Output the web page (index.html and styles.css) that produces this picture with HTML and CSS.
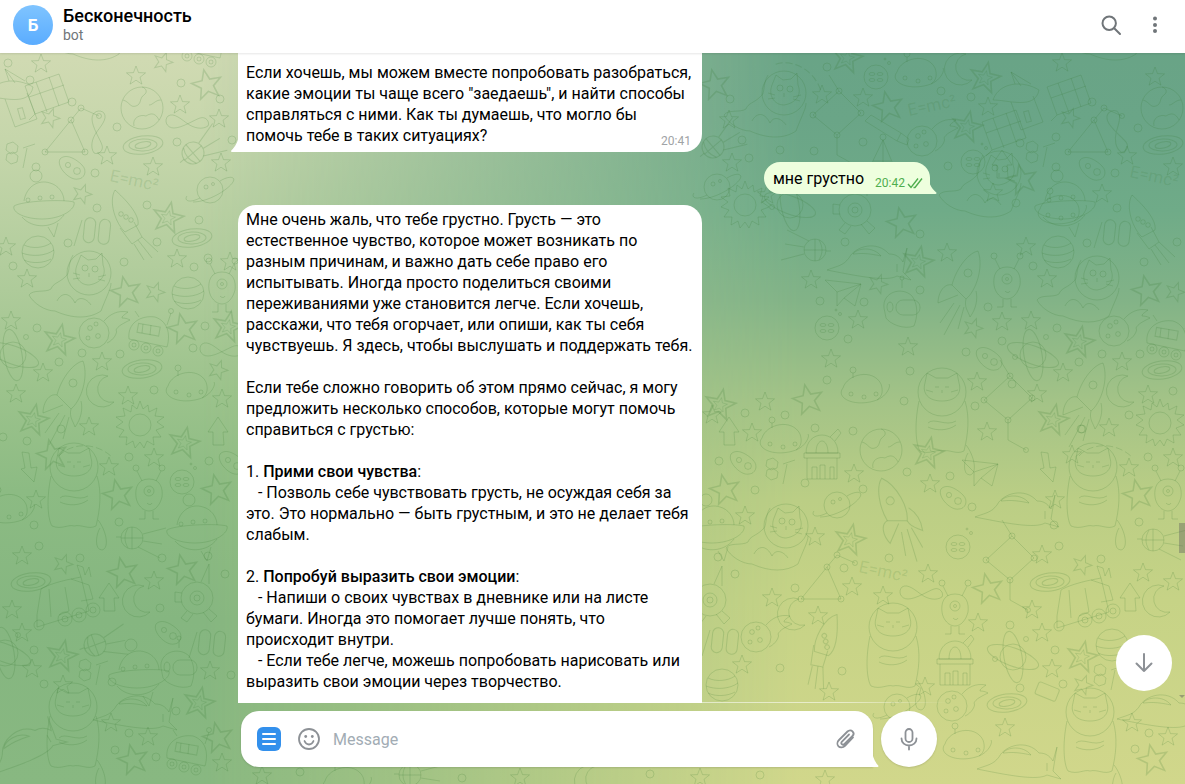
FILE: index.html
```html
<!DOCTYPE html>
<html lang="ru">
<head>
<meta charset="utf-8">
<title>Бесконечность</title>
<link rel="stylesheet" href="styles.css">
</head>
<body>
<div class="app">
<svg class="wallpaper" width="1185" height="784" viewBox="0 0 1185 784" aria-hidden="true">
<defs>
<polygon id="a" points="0,-10 2.5,-3.4 9.5,-3.1 4,1.3 5.9,8.1 0,4.2 -5.9,8.1 -4,1.3 -9.5,-3.1 -2.5,-3.4"/>
<g id="b"><use href="#a" transform="rotate(20)"/></g>
<g id="c"><use href="#a" transform="rotate(-12) scale(1.55)"/></g>
<g id="d"><use href="#a" transform="rotate(12) scale(1.6)"/><use href="#a" transform="rotate(12) scale(.75)"/></g>
<circle id="o" r="4"/>
<g id="sat"><circle r="13"/><path d="M-10,8C-22,14-26,10-23,6M10,-9C20,-15 26,-13 23,-8C18,0-2,12-17,12"/><circle cx="-4" cy="-3" r="2"/><circle cx="3" cy="-6" r="1.5"/></g>
<g id="str"><circle r="16"/><path d="M-14,-7C-6,-3 6,-4 13,-9M-16,1C-6,5 8,4 16,-2M-14,8C-6,12 6,11 13,7"/></g>
<g id="glo"><circle r="21"/><path d="M-19,-8C-12,-6-12,0-6,-2 0,-4-3,-10 2,-13 6,-16 4,-20 0,-21M-8,18C-10,10-2,6 4,8 10,4 14,6 17,12M19,-8C13,-8 11,-3 7,-3"/></g>
<g id="gal" transform="rotate(-8)"><ellipse rx="20" ry="9"/><ellipse rx="14" ry="6" transform="rotate(6)"/><ellipse rx="8" ry="3" transform="rotate(-4)"/></g>
<path id="mo" d="M6,-16A16,16 0 1 0 12,10A13,13 0 0 1 6,-16Z"/>
<path id="ar" d="M0,-15L10,0L5,0L6,13L-5,13L-5,0L-10,0Z"/>
<path id="ard" d="M-6,-15L1,-14L3,1L9,0L6,15L-7,2L-3,1Z"/>
<g id="sun"><circle r="11"/><path d="M0,-24L3,-16 8,-20 9,-13 17,-17 15,-9 24,-8 17,-3 24,2 16,5 21,12 13,12 14,20 7,16 4,23 0,17 -5,23 -7,16 -14,20 -13,12 -21,12 -16,5 -24,2 -17,-3 -24,-8 -15,-9 -17,-17 -9,-13 -8,-20 -3,-16Z"/></g>
<g id="ro"><path d="M-13,-30C-4,-22 12,-6 10,5L-3,12C-12,4-20,-18-13,-30Z"/><path d="M-8,8L4,24 14,17 6,2"/><circle cx="-7" cy="-6" r="2.3"/><circle cx="-2" cy="-3" r="2.3"/><circle cx="3" cy="0" r="2.3"/><path d="M10,20L24,38M6,24L16,40M14,17L30,32"/></g>
<g id="rof"><path d="M18,-34C8,-32-4,-16-8,0L6,14C16,6 24,-18 18,-34Z"/><path d="M-8,0C-16,-2-22,8-22,18L-2,10M6,14C4,22 8,26 10,32 16,24 18,14 16,6"/><circle cx="8" cy="-12" r="4"/><path d="M-6,18L-20,38M0,20L-16,50M4,22L-2,44"/></g>
<g id="cat"><circle cx="14" cy="-22" r="22"/><path d="M2,-30L6,-40 13,-35 21,-36 27,-42 28,-30C32,-20 26,-12 14,-10 4,-10-2,-20 2,-30Z"/><circle cx="10" cy="-27" r="3"/><circle cx="20" cy="-26" r="3"/><path d="M14,-22V-18M5,-20L-2,-22M5,-17L-2,-16M23,-18L31,-20M23,-16L30,-14"/><path d="M-2,-40C-8,-30-4,-22-10,-18-16,-12-22,-12-24,-6-30,-2-42,-6-46,0-42,8-30,16-20,16-2,24 14,24 26,16 32,0 36,-6 36,-12 36,-12"/><path d="M-18,6C-14,-2-6,-4 0,8 4,0 12,4 16,10"/></g>
<g id="fat"><circle cy="-33" r="24"/><path d="M-17,-42L-15,-52-6,-47H6L15,-52 17,-42C20,-32 14,-24 0,-24-14,-24-20,-32-17,-42Z"/><path d="M-7,-38H-3M3,-38H7M0,-35V-32M-9,-33L-16,-35M9,-33L16,-35"/><path d="M-23,-24C-28,0-26,20-22,26-12,30-6,24 0,26 8,24 14,30 22,26 26,10 28,-8 23,-24"/><path d="M-14,-2C-8,-8 4,2 14,-4M-14,2C-6,6 6,6 14,0"/><path d="M24,20C32,30 36,48 28,50 20,50 22,34 26,28"/></g>
<g id="uf"><path d="M-18,-2C-16,-16-4,-24 8,-20 16,-18 22,-10 22,-2"/><circle cx="-6" cy="-27" r="6"/><path d="M-28,3C-20,-2 20,-4 32,-1 34,6 20,16 0,16-16,16-30,10-28,3Z"/><path d="M-20,14C-10,26 12,26 22,12M6,24L12,34 16,20"/><circle cx="-14" cy="-3" r="2"/><circle cx="-2" cy="-5" r="2"/><circle cx="10" cy="-6" r="2"/></g>
<g id="uf2"><path d="M-20,-4C-16,-18 10,-24 18,-8 20,-2 20,4 14,8"/><path d="M-20,-4C-28,6-8,16 14,8 24,4 28,-6 26,-8"/><circle cx="-12" cy="2" r="2"/><circle cx="1" cy="5" r="2"/><circle cx="13" cy="2" r="2"/><circle cx="-10" cy="-22" r="3"/><path d="M-10,-19V-14"/></g>
<g id="al"><path d="M0,-16C12,-16 14,-6 13,2 11,10 6,16 0,16-6,16-12,10-13,2-14,-6-12,-16 0,-16Z"/><circle cy="-4" r="5"/><circle cy="-4" r="1.5"/><path d="M-7,-14L-12,-24M7,-14L12,-24M-4,16V24H-10M4,16V24H10M-2,8C0,10 2,10 3,8"/><circle cx="-13" cy="-27" r="3"/><circle cx="13" cy="-27" r="3"/></g>
<g id="me"><circle cx="-8" cy="3" r="15"/><circle cx="-12" cy="-2" r="2.4"/><circle cx="-4" cy="6" r="2.4"/><circle cx="-6" cy="-6" r="2"/><circle cx="-14" cy="8" r="2"/><path d="M2,-9C8,-16 16,-20 26,-18 22,-15 20,-14 20,-12 24,-12 26,-11 28,-10 20,-6 16,-4 14,0 16,2 12,10 5,13"/></g>
<g id="rv"><path d="M-18,6C-20,-10-6,-18 8,-16 20,-12 24,0 20,14L-18,6Z"/><rect x="-10" y="-8" width="22" height="9" transform="rotate(10)"/><path d="M-4,-9L-5,0M4,-8L3,2M20,-8L24,-20M-8,-16L-12,-22"/><circle cx="24" cy="-22" r="2.5"/><circle cx="-13" cy="12" r="5"/><circle cx="-1" cy="15" r="5"/><circle cx="11" cy="18" r="5"/><circle cx="-13" cy="12" r="2"/><circle cx="-1" cy="15" r="2"/><circle cx="11" cy="18" r="2"/></g>
<g id="h"><path d="M-18,16L-10,-10-10,-10"/><rect x="-8" y="-12" width="11" height="25" rx="5.5" transform="rotate(6)"/><rect x="7" y="-12" width="11" height="25" rx="5.5" transform="rotate(6)"/></g>
<g id="tri"><path d="M-22,16L4,-16 18,16ZM4,-16L14,-28 32,-20"/><circle cx="-22" cy="16" r="3"/><circle cx="4" cy="-16" r="3"/><circle cx="18" cy="16" r="3"/><circle cx="14" cy="-28" r="3"/><circle cx="32" cy="-20" r="2.5"/></g>
<g id="box"><path d="M-24,0L2,-24 24,-2 0,20ZM0,20V40L18,50M2,-24L-8,-40"/><circle cx="-24" cy="0" r="3"/><circle cx="2" cy="-24" r="3"/><circle cx="24" cy="-2" r="3"/><circle cx="0" cy="20" r="3"/><circle cx="18" cy="50" r="2.5"/></g>
<path id="inf" d="M-20,-6C-14,-10-6,-2 0,2 6,6 14,8 20,4 22,0 18,-6 12,-4 6,-2-6,6-14,6-22,6-24,-2-20,-6Z"/>
<g id="hex"><path d="M-8,-12L-2,-14 3,-10 2,-4-4,-2-9,-6ZM-8,-2L-2,-4 3,0 2,6-4,8-9,4ZM8,-8L20,-12M12,-8L8,12"/></g>
<g id="bl"><path d="M-12,-8C-6,-14 4,-8 10,-2 16,4 12,12 6,12-2,14-16,0-12,-8Z"/><circle cx="-4" cy="-2" r="2.6"/><circle cx="5" cy="4" r="3.4"/></g>
<g id="mf"><circle r="12"/><ellipse cx="-4" cy="-3" rx="3" ry="1.5"/><ellipse cx="4" cy="-3" rx="3" ry="1.5"/><ellipse cx="-4" cy="3" rx="3" ry="1.5"/><ellipse cx="4" cy="3" rx="3" ry="1.5"/><circle cx="13" cy="-14" r="1.5"/><circle cx="9" cy="-18" r="1"/></g>
<path id="dsh" d="M-28,6C-18,-6 8,-10 26,8" stroke-dasharray="7 3"/>
<g id="sp"><circle r="11"/><path d="M-11,0H11M0,-11V11M-4,-10C-8,-3-8,3-4,10M11,-4L34,-10M11,3L30,6M6,9L28,20M-11,-1H-16"/></g>
<g id="gr"><path d="M-20,-6L14,-18 24,10-10,22ZM-9,-10L2,20M4,-15L14,14M-16,5L19,-7"/><path d="M-10,22L-16,28"/></g>
<g id="dsh2"><path d="M-30,-10C-14,-10 12,0 16,-20 0,-30-24,-28-30,-10ZM-12,-8L-2,20 20,12 10,-14"/><rect x="0" y="2" width="5" height="11" transform="rotate(-16)"/><path d="M-8,-26L-12,-38 -2,-24M-12,-38L8,-26"/></g>
<g id="sh"><path d="M-40,12C-30,8-24,8-18,0-12,-12 10,-18 22,-4 28,-4 32,-2 36,4L40,-10 36,14 44,22 30,18C20,24-10,18-40,12Z"/><path d="M-14,-4C-10,-10 6,-12 14,-2-4,-6-10,-4-14,-4ZM30,6V14"/></g>
<g id="hel"><path d="M-14,-2C-16,-18 4,-24 14,-14 20,-6 20,6 16,16 6,20-8,14-12,8Z"/><rect x="-2" y="-10" width="24" height="15" rx="7"/><ellipse cx="-8" cy="-3" rx="3" ry="5"/><path d="M4,-22V-30"/><circle cx="4" cy="-32" r="2"/></g>
<g id="tr"><path d="M-30,8L-26,-18C-20,-22-6,-26 4,-28L14,-30 22,4-30,20Z"/><path d="M-18,-18L-16,10M-2,-20L2,4 -8,8M4,-28L22,-22 26,-8 14,-6M14,-30L10,-42 16,-40 18,-32M18,-32L22,-40 24,-30"/><circle cx="-28" cy="18" r="5"/><circle cx="-2" cy="12" r="7"/><circle cx="12" cy="8" r="7"/><circle cx="26" cy="3" r="7"/><circle cx="-2" cy="12" r="3"/><circle cx="12" cy="8" r="3"/><circle cx="26" cy="3" r="3"/></g>
<g id="ob"><path d="M-16,-4C-16,-28 16,-28 16,-4ZM-6,-4C-6,-20 6,-20 6,-4M-18,-4H18V1H-18ZM-15,1V22H15V1M-10,22V10H-5V22M-2,22V8H3V22M8,22V10H12V22M8,-20L16,-28 19,-24 13,-16"/></g>
<path id="pl" d="M-18,-10L18,-6 12,16 1,8-6,16-6,2ZM18,-6L-6,2M18,-6L1,8"/>
<g id="te"><path d="M-18,-12L-12,-18 18,0 14,8ZM18,0L26,6 24,12 14,8"/><circle cy="4" r="3"/><path d="M0,7L-14,36M0,7L12,36M0,7V36M-10,28H8"/></g>
<g id="at"><circle r="13"/><ellipse rx="27" ry="9" transform="rotate(20)"/><ellipse rx="26" ry="9" transform="rotate(80)"/><circle cx="13" cy="-18" r="2.5"/><circle cx="-18" cy="2" r="2.5"/></g>
<g id="rb"><circle r="16"/><circle r="7"/><circle r="3"/><path d="M-15,-5L-22,-6V4L-15,4M4,-16L12,-34 12,-14M-10,13L-16,20-10,24-4,16M6,14L14,24 20,18 12,11"/></g>
<g id="ph"><rect x="-11" y="-7" width="22" height="13" rx="2" transform="rotate(22)"/></g>
<text id="emc" class="emc" text-anchor="middle" transform="rotate(12)">E=mc²</text>
</defs>
<g class="doodles">
<!-- left column -->
<use href="#a" x="41" y="64"/><use href="#o" x="30" y="80"/><use href="#o" x="8" y="63"/><use href="#b" x="50" y="118"/><use href="#o" x="72" y="102"/>
<use href="#dsh2" x="17" y="107"/><use href="#gr" x="45" y="92"/><use href="#a" x="136" y="76"/><use href="#glo" x="142" y="108"/>
<use href="#cat" x="93" y="38"/><use href="#rv" x="200" y="44"/><use href="#b" x="163" y="62"/><use href="#c" x="207" y="85"/><use href="#o" x="181" y="83"/>
<use href="#a" x="180" y="105"/><use href="#o" x="220" y="99"/><use href="#a" x="219" y="119"/><use href="#inf" x="188" y="122"/><use href="#o" x="117" y="127"/>
<use href="#tri" x="67" y="136"/><use href="#inf" x="98" y="133" transform="rotate(90 98 133) scale(1)"/><use href="#gal" x="143" y="145"/><use href="#o" x="177" y="142"/>
<use href="#sp" x="193" y="153" transform="rotate(-40 193 153)"/><use href="#o" x="232" y="140"/><use href="#a" x="107" y="156"/><use href="#a" x="153" y="167"/>
<use href="#bl" x="72" y="167"/><use href="#o" x="36" y="167"/><use href="#hex" x="15" y="156"/><use href="#o" x="95" y="173"/><use href="#a" x="221" y="163"/>
<use href="#emc" x="133" y="186"/><use href="#sat" x="210" y="190"/><use href="#uf" x="42" y="203"/><use href="#b" x="82" y="194"/><use href="#o" x="97" y="208"/><use href="#o" x="147" y="205"/>
<use href="#d" x="168" y="218"/><use href="#ro" x="128" y="220"/><use href="#h" x="92" y="230"/><use href="#o" x="199" y="220"/><use href="#gal" x="192" y="238"/><use href="#o" x="157" y="242"/>
<use href="#o" x="68" y="243"/><use href="#str" x="38" y="252"/><use href="#a" x="6" y="247"/><use href="#a" x="177" y="259"/><use href="#o" x="208" y="258"/><use href="#a" x="230" y="262"/>
<use href="#o" x="194" y="267"/><use href="#o" x="13" y="266"/><use href="#o" x="124" y="262"/><use href="#cat" x="75" y="295"/><use href="#a" x="27" y="279"/><use href="#c" x="126" y="292"/><use href="#b" x="155" y="292"/>
<use href="#str" x="188" y="293"/><use href="#al" x="222" y="288"/><use href="#a" x="11" y="321"/><use href="#o" x="37" y="328"/><use href="#me" x="102" y="330"/><use href="#rv" x="147" y="333"/>
<use href="#c" x="183" y="329"/><use href="#o" x="205" y="326"/><use href="#d" x="228" y="327"/><use href="#d" x="59" y="340"/><use href="#at" x="13" y="355"/><use href="#o" x="82" y="353"/><use href="#o" x="120" y="354"/>
<use href="#o" x="193" y="348"/><use href="#inf" x="222" y="350"/><use href="#a" x="102" y="362"/><use href="#o" x="59" y="362"/><use href="#a" x="43" y="373"/><use href="#gal" x="142" y="369"/>
<use href="#uf2" x="188" y="390"/><use href="#b" x="218" y="370"/><use href="#mo" x="102" y="392"/><use href="#rof" x="65" y="395"/><use href="#a" x="128" y="396"/><use href="#o" x="154" y="390"/><use href="#a" x="16" y="394"/><use href="#a" x="222" y="399"/>
<use href="#d" x="33" y="420"/><use href="#a" x="89" y="427"/><use href="#sun" x="140" y="425"/><use href="#d" x="184" y="443"/><use href="#ar" x="218" y="432"/><use href="#o" x="61" y="429"/><use href="#o" x="27" y="441"/><use href="#o" x="3" y="437"/>
<use href="#c" x="52" y="455"/><use href="#dsh" x="87" y="450"/><use href="#a" x="154" y="458"/><use href="#o" x="129" y="457"/><use href="#o" x="209" y="461"/><use href="#a" x="109" y="467"/><use href="#ard" x="28" y="467"/><use href="#bl" x="232" y="462"/>
<use href="#fat" x="74" y="500"/><use href="#al" x="149" y="495"/><use href="#mf" x="182" y="482"/><use href="#c" x="118" y="495"/><use href="#c" x="217" y="490"/><use href="#a" x="36" y="500"/><use href="#uf2" x="8" y="512"/><use href="#uf" x="195" y="527"/>
<use href="#o" x="119" y="522"/><use href="#o" x="34" y="525"/><use href="#sp" x="132" y="538"/><use href="#o" x="39" y="546"/><use href="#o" x="208" y="556"/><use href="#o" x="162" y="558"/><use href="#a" x="22" y="556"/><use href="#b" x="63" y="564"/><use href="#o" x="80" y="558"/>
<use href="#c" x="123" y="573"/><use href="#c" x="183" y="570"/><use href="#o" x="225" y="574"/><use href="#a" x="154" y="581"/><use href="#gal" x="31" y="582"/><use href="#rb" x="197" y="598"/><use href="#tr" x="67" y="607"/><use href="#ar" x="109" y="598"/><use href="#mo" x="138" y="602"/>
<use href="#a" x="12" y="610"/><use href="#o" x="160" y="608"/><use href="#a" x="22" y="633"/><use href="#bl" x="168" y="632"/><use href="#h" x="207" y="642"/><use href="#sp" x="95" y="645" transform="rotate(-20 95 645)"/><use href="#at" x="5" y="653"/><use href="#o" x="34" y="650"/>
<use href="#d" x="62" y="656"/><use href="#uf" x="137" y="672"/><use href="#hel" x="175" y="670"/><use href="#a" x="210" y="671"/><use href="#o" x="231" y="675"/><use href="#a" x="32" y="669"/><use href="#hex" x="88" y="673"/><use href="#o" x="44" y="684"/><use href="#a" x="63" y="685"/><use href="#o" x="112" y="682"/>
<use href="#d" x="199" y="703"/><use href="#sh" x="133" y="708"/><use href="#o" x="176" y="711"/><use href="#fat" x="73" y="740"/><use href="#a" x="111" y="723"/><use href="#o" x="129" y="733"/><use href="#a" x="148" y="737"/><use href="#rv" x="185" y="752"/><use href="#c" x="218" y="738"/><use href="#c" x="133" y="760"/><use href="#o" x="115" y="750"/><use href="#o" x="156" y="757"/><use href="#a" x="222" y="763"/><use href="#sh" x="18" y="745" transform="rotate(-30 18 745)"/>
<!-- right: upper band -->
<use href="#c" x="715" y="85"/><use href="#cat" x="770" y="115"/><use href="#dsh" x="803" y="73" transform="rotate(30 803 73)"/><use href="#a" x="822" y="95"/><use href="#o" x="730" y="99"/><use href="#a" x="729" y="120"/>
<use href="#box" x="837" y="115"/><use href="#a" x="863" y="98"/><use href="#c" x="888" y="107"/><use href="#mf" x="876" y="77"/><use href="#o" x="827" y="67"/><use href="#d" x="847" y="58"/><use href="#uf2" x="917" y="76"/><use href="#mo" x="960" y="70"/><use href="#d" x="985" y="78"/><use href="#o" x="941" y="91"/>
<use href="#emc" x="933" y="111" transform="rotate(-24 933 111)"/><use href="#dsh2" x="1023" y="110"/><use href="#gr" x="1067" y="93"/><use href="#gr" x="1002" y="128"/><use href="#a" x="988" y="107"/><use href="#o" x="971" y="97"/><use href="#te" x="883" y="133"/><use href="#me" x="930" y="138"/>
<use href="#d" x="967" y="127"/><use href="#b" x="1070" y="118"/><use href="#o" x="1092" y="102"/><use href="#glo" x="1162" y="108"/><use href="#a" x="1062" y="63"/><use href="#cat" x="1110" y="38"/><use href="#a" x="1155" y="77"/><use href="#tri" x="1090" y="136"/>
<use href="#inf" x="1118" y="132" transform="rotate(70 1118 132)"/><use href="#gal" x="1163" y="145"/><use href="#o" x="1138" y="128"/><use href="#sat" x="717" y="187"/><use href="#sp" x="713" y="147" transform="rotate(-40 713 147)"/><use href="#a" x="732" y="163"/><use href="#o" x="742" y="140"/><use href="#o" x="749" y="158"/><use href="#o" x="780" y="150"/><use href="#o" x="814" y="151"/><use href="#o" x="863" y="142"/><use href="#a" x="767" y="195"/>
<use href="#mf" x="973" y="162"/><use href="#ar" x="1002" y="165"/><use href="#hex" x="1035" y="155"/><use href="#c" x="1022" y="180"/><use href="#o" x="948" y="166"/><use href="#o" x="1020" y="143"/><use href="#o" x="1056" y="137"/><use href="#a" x="1127" y="156"/><use href="#bl" x="1092" y="168"/><use href="#o" x="1056" y="167"/><use href="#a" x="1173" y="167"/><use href="#emc" x="1153" y="182"/><use href="#o" x="1115" y="173"/>
<use href="#uf" x="1063" y="203"/><use href="#a" x="1102" y="194"/><use href="#a" x="993" y="193"/><use href="#o" x="1016" y="203"/>
<!-- right: middle band -->
<use href="#rb" x="855" y="210"/><use href="#at" x="790" y="205"/><use href="#sun" x="745" y="205"/><use href="#c" x="902" y="223"/><use href="#o" x="920" y="234"/><use href="#cat" x="985" y="195"/><use href="#uf2" x="1060" y="213"/><use href="#o" x="1117" y="208"/><use href="#h" x="1112" y="232"/><use href="#ro" x="1145" y="225"/><use href="#str" x="1058" y="252"/><use href="#o" x="1087" y="243"/><use href="#o" x="845" y="242"/>
<use href="#sp" x="815" y="250" transform="rotate(180 815 250)"/><use href="#sh" x="867" y="258"/><use href="#d" x="918" y="262"/><use href="#a" x="947" y="253"/><use href="#a" x="1026" y="247"/><use href="#o" x="1177" y="242"/><use href="#o" x="1144" y="262"/><use href="#rof" x="960" y="285"/><use href="#o" x="1033" y="266"/><use href="#al" x="1007" y="283"/><use href="#cat" x="1083" y="300"/><use href="#a" x="1047" y="279"/><use href="#b" x="878" y="284"/><use href="#pl" x="843" y="290"/>
<use href="#a" x="811" y="280"/><use href="#c" x="1147" y="291"/><use href="#b" x="1175" y="292"/><use href="#hel" x="898" y="310"/><use href="#o" x="920" y="290"/><use href="#o" x="864" y="302"/><use href="#o" x="820" y="301"/><use href="#o" x="988" y="307"/><use href="#mf" x="827" y="328"/><use href="#a" x="858" y="320"/><use href="#b" x="973" y="328"/><use href="#a" x="1002" y="322"/><use href="#a" x="1031" y="321"/><use href="#o" x="1057" y="328"/>
<use href="#me" x="1122" y="328"/><use href="#rv" x="1165" y="337"/><use href="#o" x="848" y="339"/><use href="#d" x="1079" y="342"/><use href="#at" x="1033" y="355"/><use href="#o" x="1002" y="341"/><use href="#a" x="908" y="347"/><use href="#o" x="966" y="352"/><use href="#bl" x="989" y="358"/><use href="#o" x="1140" y="354"/><use href="#o" x="1102" y="354"/><use href="#a" x="831" y="359"/><use href="#o" x="1079" y="362"/><use href="#a" x="1122" y="362"/><use href="#gal" x="1162" y="370"/><use href="#a" x="1063" y="373"/>
<use href="#uf2" x="863" y="392"/><use href="#fat" x="942" y="425"/><use href="#rof" x="1085" y="397"/><use href="#a" x="977" y="382"/><use href="#o" x="910" y="371"/><use href="#o" x="827" y="380"/><use href="#o" x="1012" y="384"/><use href="#mo" x="1122" y="392"/><use href="#a" x="1148" y="395"/><use href="#o" x="1173" y="391"/><use href="#c" x="808" y="400"/><use href="#o" x="904" y="401"/><use href="#o" x="975" y="406"/><use href="#box" x="1008" y="400"/><use href="#a" x="1037" y="394"/><use href="#o" x="1129" y="415"/><use href="#sun" x="1160" y="423"/>
<use href="#d" x="1053" y="420"/><use href="#a" x="1109" y="428"/><use href="#o" x="1082" y="429"/><use href="#a" x="987" y="432"/><use href="#d" x="720" y="405"/><use href="#a" x="765" y="402"/><use href="#o" x="785" y="415"/><use href="#a" x="712" y="415"/>
<use href="#ar" x="729" y="432"/><use href="#a" x="752" y="433"/><use href="#uf2" x="782" y="442"/><use href="#o" x="745" y="413"/><use href="#o" x="815" y="428"/><use href="#o" x="853" y="431"/><use href="#ob" x="822" y="457"/><use href="#glo" x="881" y="450"/><use href="#d" x="928" y="453"/><use href="#o" x="719" y="461"/><use href="#bl" x="743" y="462"/><use href="#pl" x="980" y="470"/><use href="#ard" x="1047" y="467"/><use href="#a" x="1072" y="455"/><use href="#dsh" x="1107" y="450"/><use href="#o" x="1081" y="429"/><use href="#a" x="1173" y="458"/><use href="#a" x="1129" y="468"/><use href="#o" x="1148" y="457"/>
<use href="#hex" x="775" y="472"/><use href="#a" x="854" y="474"/><use href="#o" x="907" y="472"/><use href="#a" x="930" y="484"/><use href="#o" x="950" y="476"/><use href="#bl" x="953" y="497"/><use href="#c" x="725" y="490"/><use href="#o" x="755" y="490"/><use href="#o" x="805" y="483"/><use href="#o" x="863" y="489"/><use href="#sat" x="837" y="505"/><use href="#rof" x="893" y="515" transform="rotate(-45 893 515)"/><use href="#sh" x="1015" y="505"/><use href="#cat" x="772" y="548"/><use href="#a" x="1055" y="500"/><use href="#fat" x="1093" y="500"/><use href="#c" x="1138" y="495"/><use href="#al" x="1168" y="495"/>
<use href="#a" x="745" y="516"/><use href="#o" x="972" y="507"/><use href="#uf" x="712" y="527"/><use href="#o" x="1054" y="525"/><use href="#o" x="1139" y="522"/><use href="#sp" x="1153" y="540"/><use href="#mf" x="958" y="547"/><use href="#d" x="850" y="540"/><use href="#a" x="815" y="537"/><use href="#box" x="1010" y="560"/><use href="#o" x="718" y="557"/><use href="#a" x="1042" y="555"/><use href="#o" x="1059" y="546"/><use href="#b" x="1082" y="565"/><use href="#o" x="889" y="558"/><use href="#o" x="1101" y="559"/>
<use href="#emc" x="882" y="577"/><use href="#o" x="844" y="568"/><use href="#a" x="928" y="574"/><use href="#o" x="735" y="574"/><use href="#a" x="1143" y="573"/><use href="#tri" x="823" y="583"/><use href="#a" x="852" y="587"/><use href="#gal" x="1050" y="582"/><use href="#a" x="1173" y="582"/><use href="#c" x="988" y="589"/><use href="#o" x="795" y="588"/><use href="#a" x="772" y="598"/><use href="#a" x="883" y="596"/><use href="#inf" x="922" y="593"/><use href="#al" x="955" y="610"/><use href="#tr" x="1087" y="608"/><use href="#ar" x="1130" y="598"/><use href="#mo" x="1158" y="602"/><use href="#mo" x="793" y="615"/><use href="#a" x="818" y="616"/><use href="#a" x="1032" y="610"/><use href="#rb" x="710" y="600"/>
<!-- right: lower band -->
<use href="#me" x="764" y="634"/><use href="#a" x="978" y="623"/><use href="#o" x="1010" y="625"/><use href="#ro" x="825" y="645" transform="rotate(45 825 645)"/><use href="#fat" x="893" y="660"/><use href="#ob" x="955" y="663"/><use href="#at" x="1013" y="657"/><use href="#d" x="1082" y="657"/><use href="#a" x="1052" y="669"/><use href="#o" x="1055" y="650"/><use href="#o" x="842" y="671"/><use href="#a" x="1042" y="633"/><use href="#str" x="1112" y="645"/><use href="#h" x="720" y="640"/><use href="#a" x="742" y="665"/><use href="#o" x="780" y="668"/><use href="#str" x="722" y="685"/>
<use href="#a" x="829" y="692"/><use href="#a" x="925" y="687"/><use href="#me" x="960" y="703"/><use href="#gal" x="1007" y="703"/><use href="#o" x="1020" y="688"/><use href="#ph" x="1047" y="692"/><use href="#b" x="1083" y="685"/><use href="#o" x="1063" y="684"/><use href="#hex" x="1103" y="678"/><use href="#sh" x="1157" y="707"/><use href="#sat" x="897" y="707"/><use href="#uf2" x="965" y="748"/><use href="#a" x="1005" y="728"/><use href="#sh" x="1017" y="757"/><use href="#fat" x="1090" y="745"/><use href="#a" x="1132" y="723"/><use href="#o" x="1149" y="733"/><use href="#a" x="1168" y="737"/><use href="#o" x="1135" y="749"/><use href="#c" x="1153" y="760"/>
<!-- lower strip -->
<use href="#a" x="262" y="776"/><use href="#o" x="300" y="772"/><use href="#uf2" x="345" y="785"/><use href="#sp" x="410" y="775"/><use href="#o" x="462" y="778"/><use href="#a" x="520" y="778"/><use href="#mo" x="590" y="782"/><use href="#o" x="650" y="774"/><use href="#a" x="700" y="778"/><use href="#o" x="760" y="775"/><use href="#a" x="825" y="780"/>
</g>
</svg>

<header class="topbar">
<div class="avatar">Б</div>
<div class="peer">
<div class="peer-name">Бесконечность</div>
<div class="peer-status">bot</div>
</div>
<button class="icon-btn" aria-label="Search">
<svg width="24" height="24" viewBox="0 0 24 24"><circle cx="10.2" cy="10.2" r="6.7"/><path d="M15.2 15.2L21 21"/></svg>
</button>
<button class="icon-btn icon-btn-more" aria-label="More">
<svg width="24" height="24" viewBox="0 0 24 24"><circle class="solid" cx="12" cy="5.6" r="2"/><circle class="solid" cx="12" cy="12" r="2"/><circle class="solid" cx="12" cy="18" r="2"/></svg>
</button>
</header>

<main class="chat">
<div class="column">
<div class="bubble in first"><p class="text">Если хочешь, мы можем вместе попробовать разобраться,
какие эмоции ты чаще всего "заедаешь", и найти способы
справляться с ними. Как ты думаешь, что могло бы</p>
<div class="last-line"><span class="text">помочь тебе в таких ситуациях?</span><span class="time">20:41</span></div>
<svg class="tail tail-left" width="8" height="20" viewBox="0 0 8 20"><path d="M8 0V20H1C0 20 -.3 19 .5 18.3C4 15 8 9 8 0Z"/></svg>
</div>
<div class="bubble out"><span class="out-text">мне грустно</span><span class="meta">20:42<svg class="checks" width="19" height="12" viewBox="0 0 19 12"><path d="M1 7L4 10.5L11 1.5M6.500 10.500L8 10.500L15 1.500"/></svg></span>
<svg class="tail tail-right" width="9" height="20" viewBox="0 0 9 20"><path d="M0 0C0 8 3 14 8 18.300C9 19 8.600 20 7.500 20H0Z"/></svg>
</div>
<div class="bubble in long">
<p class="text para">Мне очень жаль, что тебе грустно. Грусть — это
естественное чувство, которое может возникать по
разным причинам, и важно дать себе право его
испытывать. Иногда просто поделиться своими
переживаниями уже становится легче. Если хочешь,
расскажи, что тебя огорчает, или опиши, как ты себя
чувствуешь. Я здесь, чтобы выслушать и поддержать тебя.</p>
<p class="text para">Если тебе сложно говорить об этом прямо сейчас, я могу
предложить несколько способов, которые могут помочь
справиться с грустью:</p>
<p class="text"><span>1. </span><b>Прими свои чувства</b><span>:</span></p>
<p class="text para">   - Позволь себе чувствовать грусть, не осуждая себя за
это. Это нормально — быть грустным, и это не делает тебя
слабым.</p>
<p class="text"><span>2. </span><b>Попробуй выразить свои эмоции</b><span>:</span></p>
<p class="text">   - Напиши о своих чувствах в дневнике или на листе
бумаги. Иногда это помогает лучше понять, что
происходит внутри.</p>
<p class="text">   - Если тебе легче, можешь попробовать нарисовать или
выразить свои эмоции через творчество.</p>
</div>
</div>
<div class="divider"></div>
<button class="scroll-down" aria-label="Down">
<svg width="24" height="24" viewBox="0 0 24 24"><path d="M12 3V20M4.500 12.500L12 20L19.500 12.500"/></svg>
</button>
<div class="scroll-thumb"></div>
<div class="scroll-arrow"></div>
</main>

<footer class="composer">
<div class="input">
<span class="menu-btn"><i></i><i></i><i></i></span>
<svg class="smile" width="24" height="24" viewBox="0 0 24 24"><circle cx="12" cy="12" r="10"/><path d="M7.500 14C8.500 16.500 10 17.500 12 17.500S15.500 16.500 16.500 14"/><circle class="solid" cx="8.700" cy="9.500" r="1.400"/><circle class="solid" cx="15.300" cy="9.500" r="1.400"/></svg>
<span class="placeholder">Message</span>
<svg class="clip" width="24" height="24" viewBox="0 0 24 24"><path d="M19 10.500L11 18.800C9 20.800 6 20.800 4.500 19.300S3 15 5 13L13.500 4.500C15 3 17.200 3 18.500 4.300S20 7.500 18.500 9L10.500 17C9.700 17.800 8.500 17.800 7.800 17.100S7.300 15.300 8 14.500L15 7.500"/></svg>
<svg class="tail tail-composer" width="7" height="20" viewBox="0 0 7 20"><path d="M0 0C0 8 2 14 6 18.300C6.800 19 6.600 20 5.500 20H0Z"/></svg>
</div>
<button class="mic" aria-label="Record">
<svg width="24" height="24" viewBox="0 0 24 24"><rect x="8.500" y="2" width="7" height="13" rx="3.500"/><path d="M4.500 11.500C4.500 16 8 18.500 12 18.500S19.500 16 19.500 11.500M12 18.500V22.500"/></svg>
</button>
</footer>
</div>
</body>
</html>
```

FILE: styles.css
```css
* { box-sizing: border-box; }

html, body {
  margin: 0;
  height: 100%;
  overflow: hidden;
}

body {
  font-family: Roboto, "Liberation Sans", sans-serif;
  font-size: 16px;
  color: #000;
}

.app {
  position: relative;
  display: flex;
  flex-direction: column;
  width: 100%;
  height: 100vh;
  background: linear-gradient(180deg, #d4dcb6 0, #d0dab2 60px, #c3d5a9 160px, #aecb9a 290px, #9cc38c 390px, #8cbb83 490px, #85b680 620px, #88b881 784px);
}

.app::before {
  content: "";
  position: absolute;
  inset: 0;
  background: linear-gradient(180deg, #68a386 0, #6aa587 120px, #6fab88 210px, #82b387 300px, #a3c387 400px, #bbce85 500px, #c6d386 600px, #d1d78b 784px);
  -webkit-mask-image: linear-gradient(90deg, transparent 200px, #000 800px);
  mask-image: linear-gradient(90deg, transparent 200px, #000 800px);
}

.wallpaper {
  position: absolute;
  inset: 0;
}

.doodles {
  fill: none;
  stroke: rgba(50, 115, 45, .18);
  stroke-width: 1;
}

.doodles * {
  vector-effect: non-scaling-stroke;
}

.emc {
  font-family: Roboto, sans-serif;
  font-size: 17px;
  fill: rgba(50, 115, 45, .14);
  stroke: none;
}

/* top bar */
.topbar {
  position: relative;
  z-index: 2;
  display: flex;
  align-items: center;
  flex: none;
  height: 53px;
  padding: 0 18px 3px 13px;
  background: #fff;
  box-shadow: 0 1px 2px rgba(0, 0, 0, .1);
}

.avatar {
  display: flex;
  align-items: center;
  justify-content: center;
  flex: none;
  width: 40px;
  height: 40px;
  border-radius: 50%;
  background: linear-gradient(#7fc4ff, #5aacff);
  color: #fff;
  font-size: 17px;
  font-weight: 700;
}

.peer {
  flex: 1;
  margin-left: 10px;
}

.peer-name {
  font-size: 18px;
  font-weight: 500;
  line-height: 21px;
  margin-top: -1px;
}

.peer-status {
  font-size: 14px;
  line-height: 18px;
  color: #707579;
}

.icon-btn {
  display: flex;
  padding: 0;
  border: 0;
  background: none;
}

.icon-btn svg {
  fill: none;
  stroke: #707579;
  stroke-width: 2;
  stroke-linecap: round;
}

.icon-btn-more {
  margin-left: 20px;
}

.solid {
  fill: #707579;
  stroke: none;
}

/* messages */
.chat {
  position: relative;
  z-index: 1;
  flex: 1;
  min-height: 0;
}

.column {
  display: flex;
  flex-direction: column;
  align-items: flex-start;
  width: 699px;
  margin-left: 238px;
}

.bubble {
  position: relative;
  background: #fff;
}

.bubble.in {
  width: 464px;
  padding-left: 8px;
}

.text {
  margin: 0;
  font-size: 16px;
  line-height: 21px;
  white-space: pre-wrap;
}

.para {
  margin-bottom: 21px;
}

.text b {
  font-weight: 500;
}

.first {
  height: 99px;
  padding-top: 9px;
  border-radius: 0 0 18px 0;
}

.last-line {
  display: flex;
  justify-content: space-between;
  align-items: flex-start;
  padding-right: 11px;
}

.long {
  height: 498px;
  margin-top: 11px;
  padding-top: 4px;
  border-radius: 18px 18px 0 0;
}

.time {
  margin-top: 9px;
  font-size: 12px;
  line-height: 14px;
  color: #a0a3a6;
}

.out {
  display: flex;
  align-items: flex-start;
  align-self: flex-end;
  width: 166px;
  height: 32px;
  margin: 10px 7px 0 0;
  padding: 6px 0 0 9px;
  background: #eeffde;
  border-radius: 16px 16px 0 16px;
}

.out-text {
  font-size: 16px;
  line-height: 21px;
}

.meta {
  display: flex;
  align-items: center;
  margin: 8px 0 0 11px;
  font-size: 12px;
  line-height: 14px;
  color: #4fae4e;
}

.checks {
  margin-left: 2px;
  fill: none;
  stroke: #4fae4e;
  stroke-width: 1.400;
}

.tail {
  position: absolute;
  bottom: 0;
  fill: #fff;
}

.tail-left {
  left: -7px;
}

.tail-right {
  right: -7px;
  fill: #eeffde;
}

.tail-composer {
  right: -6px;
}

.divider {
  position: absolute;
  left: 238px;
  bottom: 0;
  width: 712px;
  height: 1px;
  background: linear-gradient(90deg, rgba(255, 255, 255, .55) 85%, rgba(255, 255, 255, 0));
}

.scroll-down,
.mic {
  display: flex;
  align-items: center;
  justify-content: center;
  width: 56px;
  height: 56px;
  padding: 0;
  border: 0;
  border-radius: 50%;
  background: #fff;
}

.scroll-down {
  position: absolute;
  right: 13px;
  bottom: 12px;
}

.scroll-down svg {
  fill: none;
  stroke: #8d9196;
  stroke-width: 2;
  stroke-linecap: round;
  stroke-linejoin: round;
}

.scroll-thumb {
  position: absolute;
  top: 470px;
  right: 0;
  width: 6px;
  height: 30px;
  background: rgba(90, 90, 90, .38);
}

.scroll-arrow {
  position: absolute;
  bottom: 5px;
  right: 0;
  width: 0;
  height: 0;
  border: 3px solid transparent;
  border-top-color: rgba(90, 90, 90, .45);
  border-bottom-width: 0;
}

/* composer */
.composer {
  position: relative;
  z-index: 1;
  display: flex;
  flex: none;
  gap: 8px;
  height: 81px;
  padding: 8px 0 0 241px;
}

.input {
  position: relative;
  display: flex;
  align-items: center;
  width: 632px;
  height: 56px;
  padding: 0 16px;
  background: #fff;
  border-radius: 18px 18px 0 18px;
  box-shadow: 0 1px 2px rgba(0, 0, 0, .12);
}

.menu-btn {
  display: flex;
  flex-direction: column;
  align-items: center;
  justify-content: center;
  flex: none;
  gap: 3px;
  width: 24px;
  height: 24px;
  border-radius: 6px;
  background: #3390ec;
}

.menu-btn i {
  width: 14px;
  height: 2px;
  border-radius: 1px;
  background: #fff;
}

.smile {
  flex: none;
  margin-left: 16px;
  fill: none;
  stroke: #8d9196;
  stroke-width: 1.800;
  stroke-linecap: round;
}

.smile .solid {
  fill: #8d9196;
}

.placeholder {
  flex: 1;
  margin-left: 12px;
  font-size: 16px;
  color: #a2acb4;
}

.clip {
  flex: none;
  margin-right: -1px;
  fill: none;
  stroke: #8d9196;
  stroke-width: 1.800;
  stroke-linecap: round;
}

.mic {
  box-shadow: 0 1px 2px rgba(0, 0, 0, .12);
}

.mic svg {
  fill: none;
  stroke: #8d9196;
  stroke-width: 1.800;
  stroke-linecap: round;
}
```
